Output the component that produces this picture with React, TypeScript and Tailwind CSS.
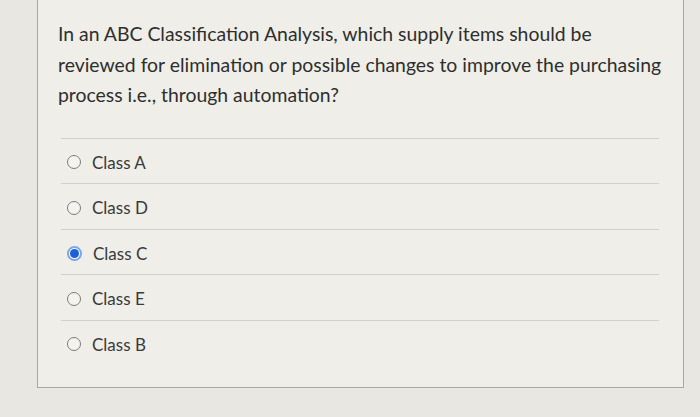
const options = [
	{ label: 'Class A', checked: false },
	{ label: 'Class D', checked: false },
	{ label: 'Class C', checked: true },
	{ label: 'Class E', checked: false },
	{ label: 'Class B', checked: false }
];

function Radio({ checked }: { checked: boolean }) {
	if (checked) {
		return (
			<span className="flex h-[15px] w-[15px] items-center justify-center rounded-full border-2 border-[#7fa6e6] bg-white">
				<span className="h-[9px] w-[9px] rounded-full bg-[#1d5fd6]" />
			</span>
		);
	}
	return (
		<span className="h-[14px] w-[14px] rounded-full border-[1.5px] border-[#7c7c7a] bg-[#f4f3ef]" />
	);
}

export default function App() {
	return (
		<div
			className="h-[417px] w-[700px] overflow-hidden bg-[#e8e7e2] pl-[37px] pr-[16px]"
			style={{ fontFamily: 'Lato, "Noto Sans", sans-serif' }}
		>
			<div className="h-[388px] border-x border-b border-[#a8a7a3] bg-[#efeee9] pl-[23px] pr-[24px] pt-[19px]">
				<p className="-ml-[3px] whitespace-nowrap text-[19.4px] leading-[30.5px] text-[#2e2e2e]">
					In an ABC Classification Analysis, which supply items should be
					<br />
					reviewed for elimination or possible changes to improve the purchasing
					<br />
					process i.e., through automation?
				</p>
				<ul className="mt-[27px]">
					{options.map((option) => (
						<li
							key={option.label}
							className="flex h-[45.5px] items-center gap-[11px] border-t border-[#d2d0cb] pl-[6px] pt-[3px]"
						>
							<Radio checked={option.checked} />
							<span className="text-[17px] text-[#3a3a3a]">
								{option.label}
							</span>
						</li>
					))}
				</ul>
			</div>
		</div>
	);
}
